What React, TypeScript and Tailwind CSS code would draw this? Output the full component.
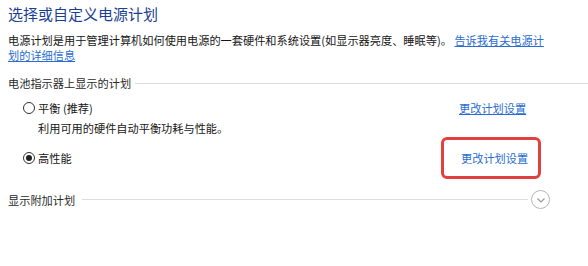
import React from 'react';

const font = { fontFamily: '"Microsoft YaHei", "Noto Sans CJK SC", "Noto Sans", sans-serif' };

const Radio: React.FC<{ checked?: boolean }> = ({ checked }) => (
  <span className="flex h-[12px] w-[12px] shrink-0 items-center justify-center rounded-full border border-[#333] bg-white">
    {checked && <span className="h-[6px] w-[6px] rounded-full bg-[#222]" />}
  </span>
);

const App: React.FC = () => {
  return (
    <div className="h-[266px] w-[588px] overflow-hidden bg-white pl-2 text-[11.2px] text-[#161616]" style={font}>
      {/* 标题 */}
      <h1 className="mt-1 text-[15px] leading-[20px] text-[#1b3f92]">选择或自定义电源计划</h1>

      <div className="mt-[9px] leading-[14.5px]">
        <div className="whitespace-nowrap">
          电源计划是用于管理计算机如何使用电源的一套硬件和系统设置(如显示器亮度、睡眠等)。{' '}
          <a href="#" className="text-[#2a6dd0] underline">告诉我有关电源计</a>
        </div>
        <a href="#" className="text-[#2a6dd0] underline">划的详细信息</a>
      </div>

      {/* 电池指示器上显示的计划 */}
      <div className="mt-[13px] flex items-center gap-[4px] leading-[16px]">
        <span className="text-[#2a2a2a]">电池指示器上显示的计划</span>
        <div className="h-px flex-1 bg-[#dcdcdc]" />
      </div>

      <div className="mt-[9px] flex items-center leading-[16px]">
        <div className="ml-[15px] flex items-center gap-[3px]">
          <Radio />
          <span>平衡 (推荐)</span>
        </div>
        <div className="ml-auto mr-[48px] w-[100px] pl-[19px]">
          <a href="#" className="text-[#2a6dd0] underline">更改计划设置</a>
        </div>
      </div>
      <div className="mt-[4px] pl-[30px] leading-[16px]">利用可用的硬件自动平衡功耗与性能。</div>

      <div className="mt-px flex items-center leading-[16px]">
        <div className="ml-[15px] flex items-center gap-[3px]">
          <Radio checked />
          <span>高性能</span>
        </div>
        <div className="ml-auto mr-[47px] flex h-[42px] w-[100px] items-center rounded-[6px] border-[3px] border-[#e2403f] pl-[17px]">
          <a href="#" className="text-[#2a6dd0]">更改计划设置</a>
        </div>
      </div>

      {/* 显示附加计划 */}
      <div className="mt-[11px] flex items-center leading-[16px]">
        <span className="text-[#2a2a2a]">显示附加计划</span>
        <div className="ml-[7px] h-px flex-1 bg-[#dcdcdc]" />
        <span className="ml-[3px] mr-[38px] flex h-[19px] w-[19px] items-center justify-center rounded-full border border-[#b5b5b5]">
          <svg width="10" height="10" viewBox="0 0 10 10" fill="none" stroke="#9a9a9a" strokeWidth="1.2">
            <path d="M1.5 3.5 L5 7 L8.5 3.5" />
          </svg>
        </span>
      </div>
    </div>
  );
};

export default App;
